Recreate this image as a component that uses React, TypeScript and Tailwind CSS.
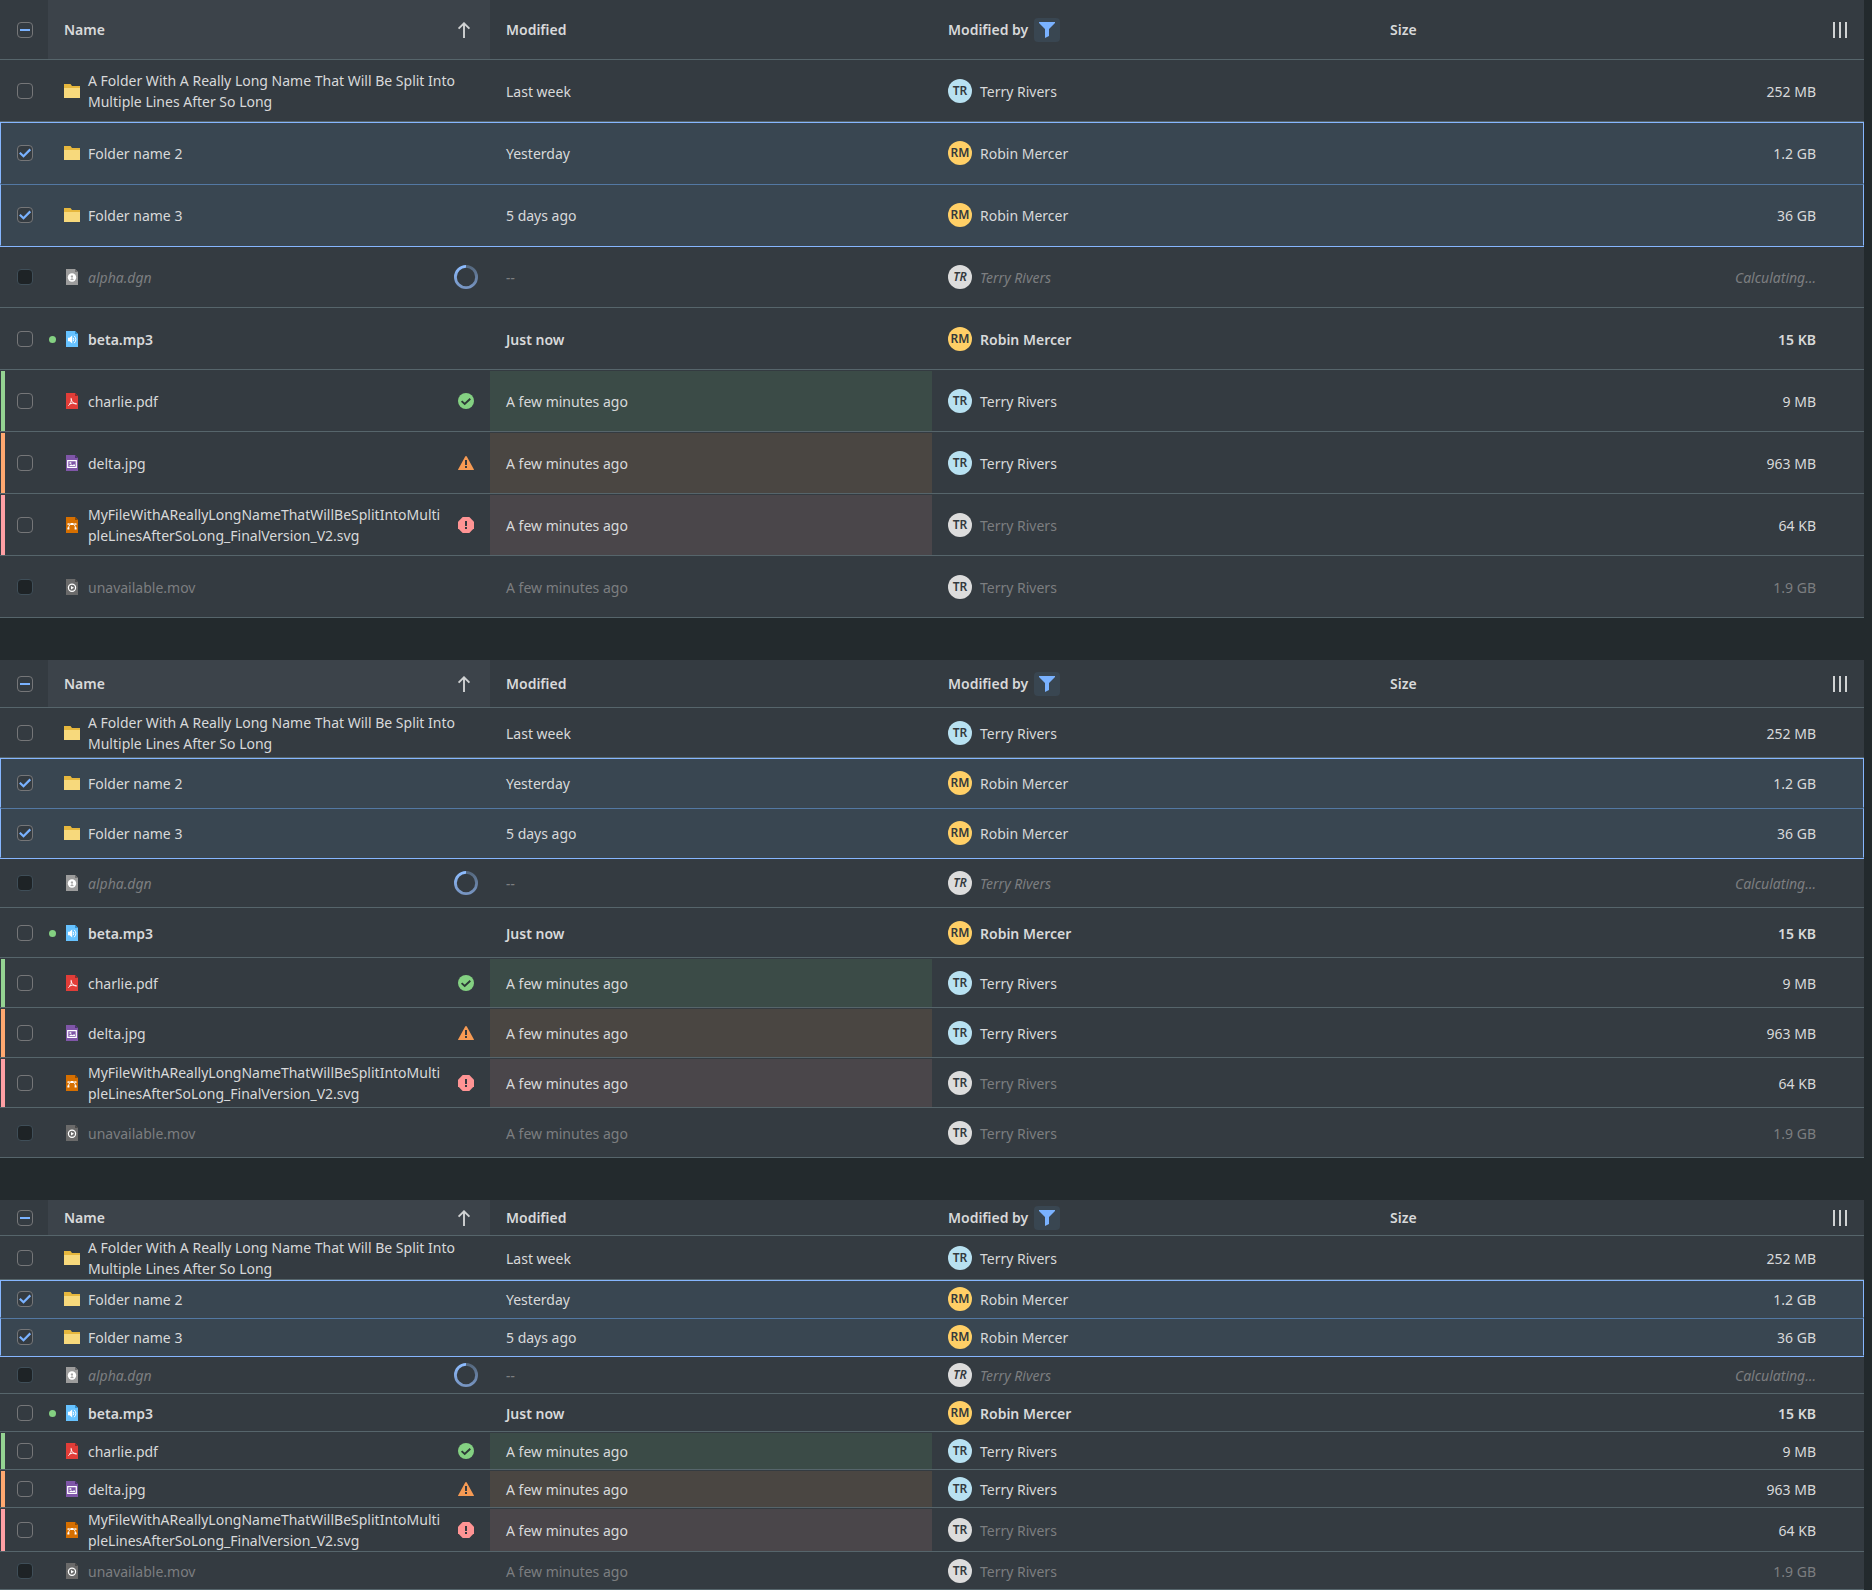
import { useEffect, useRef } from 'react';
import type { ReactNode } from 'react';

type Status = 'positive' | 'warning' | 'negative';
type FileKind = 'dgn' | 'mp3' | 'pdf' | 'jpg' | 'svg' | 'mov';

interface Row {
  name: string;
  modified: string;
  by: 'Terry Rivers' | 'Robin Mercer';
  size: string;
  kind?: FileKind;
  selected?: boolean;
  loading?: boolean;
  disabled?: boolean;
  isNew?: boolean;
  status?: Status;
  byDisabled?: boolean;
}

const rows: Row[] = [
  {
    name: 'A Folder With A Really Long Name That Will Be Split Into Multiple Lines After So Long',
    modified: 'Last week',
    by: 'Terry Rivers',
    size: '252 MB',
  },
  { name: 'Folder name 2', modified: 'Yesterday', by: 'Robin Mercer', size: '1.2 GB', selected: true },
  { name: 'Folder name 3', modified: '5 days ago', by: 'Robin Mercer', size: '36 GB', selected: true },
  { name: 'alpha.dgn', modified: '--', by: 'Terry Rivers', size: 'Calculating…', kind: 'dgn', loading: true },
  { name: 'beta.mp3', modified: 'Just now', by: 'Robin Mercer', size: '15 KB', kind: 'mp3', isNew: true },
  { name: 'charlie.pdf', modified: 'A few minutes ago', by: 'Terry Rivers', size: '9 MB', kind: 'pdf', status: 'positive' },
  { name: 'delta.jpg', modified: 'A few minutes ago', by: 'Terry Rivers', size: '963 MB', kind: 'jpg', status: 'warning' },
  {
    name: 'MyFileWithAReallyLongNameThatWillBeSplitIntoMultipleLinesAfterSoLong_FinalVersion_V2.svg',
    modified: 'A few minutes ago',
    by: 'Terry Rivers',
    size: '64 KB',
    kind: 'svg',
    status: 'negative',
    byDisabled: true,
  },
  { name: 'unavailable.mov', modified: 'A few minutes ago', by: 'Terry Rivers', size: '1.9 GB', kind: 'mov', disabled: true },
];

function FolderIcon() {
  return (
    <svg viewBox="0 0 16 16" className="size-4 shrink-0" aria-hidden="true">
      <path d="M0 1h6.500l1.500 2H16v4H0z" fill="#e6b73d" />
      <path d="M0 5h16v10H0z" fill="#f7d97c" />
    </svg>
  );
}

const fileColors: Record<FileKind, [string, string]> = {
  dgn: ['#9c9c9c', '#6f6f6f'],
  mp3: ['#66c2ff', '#2f8fd0'],
  pdf: ['#e13d38', '#8f2a28'],
  jpg: ['#7f56a8', '#4c3070'],
  svg: ['#d66f00', '#8f4a00'],
  mov: ['#6a6a6a', '#484848'],
};

const fileGlyphs: Record<FileKind, ReactNode> = {
  dgn: (
    <>
      <circle cx="8" cy="8.5" r="4.2" fill="#fff" />
      <path d="M8 6.2v4.400M6.800 7.400h2.200M6.500 10.600h3" fill="none" stroke="#9c9c9c" strokeWidth="0.900" />
    </>
  ),
  mp3: (
    <>
      <path d="M4 6.800h1.600L8.200 4.600v7.800L5.600 10.200H4z" fill="#fff" />
      <path d="M9.200 6.800q1.100 1.700 0 3.400M10.200 4.800q3.400 3.700 0 7.400" fill="none" stroke="#fff" strokeWidth="1" />
    </>
  ),
  pdf: (
    <>
      <path d="M7.100 4.900C8 8 6.300 11.500 4.300 12.700M7.200 6.200C7.800 9 9.600 10.900 12.600 11.200M5.400 11Q8.600 9.300 12.600 10.600" fill="none" stroke="#fff" strokeWidth="0.900" />
    </>
  ),
  jpg: (
    <>
      <path d="M3.700 5.700h8.600v6.600H3.700z" fill="none" stroke="#fff" strokeWidth="1.200" />
      <path d="M5.500 7.200h1.800v1.500H5.500zM5.500 11V9.900l2-.4 1.500.8L10 9l1 1v1z" fill="#fff" />
    </>
  ),
  svg: (
    <>
      <path d="M4.500 11.500C4.600 8.500 5.800 7 8 7s3.400 1.500 3.500 4.500M4 7h8" fill="none" stroke="#fff" strokeWidth="1" />
      <path d="M7 6h2v2H7zM3.400 10.600h2v2h-2zM10.600 10.600h2v2h-2zM3.400 6.400h1.300v1.300H3.400zM11.300 6.400h1.300v1.300h-1.300z" fill="#fff" />
    </>
  ),
  mov: (
    <>
      <circle cx="8" cy="8.700" r="3.600" fill="none" stroke="#fff" strokeWidth="1.200" />
      <path d="M7 6.900v3.600l3-1.800z" fill="#fff" />
    </>
  ),
};

function FileIcon({ kind }: { kind: FileKind }) {
  const [body, fold] = fileColors[kind];
  return (
    <svg viewBox="0 0 16 16" className="size-4 shrink-0" aria-hidden="true">
      <path d="M2 0h9l3 3v13H2z" fill={body} />
      <path d="M11 0l3 3h-3z" fill={fold} />
      {fileGlyphs[kind]}
    </svg>
  );
}

function StatusIcon({ status }: { status: Status }) {
  if (status === 'positive') {
    return (
      <svg viewBox="0 0 16 16" className="ml-1 size-4 shrink-0" role="img" aria-label="Positive">
        <circle cx="8" cy="8" r="8" fill="#84d182" />
        <path d="M3.600 8.100l3.100 2.900 5.600-5.300" fill="none" stroke="#2c3a36" strokeWidth="1.900" />
      </svg>
    );
  }
  if (status === 'warning') {
    return (
      <svg viewBox="0 0 16 16" className="ml-1 size-4 shrink-0" role="img" aria-label="Warning">
        <path d="M8 .9q.5 0 .8.500l7 12.800q.5.900-.5.900H.7q-1 0-.5-.9l7-12.800Q7.500.9 8 .9z" fill="#f69a54" />
        <path d="M7 5h2v5H7zM7 11h2v2H7z" fill="#33393f" />
      </svg>
    );
  }
  return (
    <svg viewBox="0 0 16 16" className="ml-1 size-4 shrink-0" role="img" aria-label="Negative">
      <path d="M4.700 0h6.600L16 4.700v6.600L11.300 16H4.700L0 11.300V4.700z" fill="#ff9494" />
      <path d="M7 4h2v5H7zM7 10h2v2H7z" fill="#33393f" />
    </svg>
  );
}

function Spinner() {
  return (
    <svg viewBox="0 0 24 24" className="-mx-1 size-6 shrink-0" role="img" aria-label="Loading">
      <defs>
        <linearGradient id="spin-left" x1="0" y1="0" x2="0" y2="1">
          <stop offset="0" stopColor="#8dbcff" />
          <stop offset="1" stopColor="#7795c2" />
        </linearGradient>
        <linearGradient id="spin-right" x1="0" y1="0" x2="0" y2="1">
          <stop offset="0" stopColor="#55687e" />
          <stop offset="1" stopColor="#7795c2" />
        </linearGradient>
      </defs>
      <path d="M12 1.400a10.600 10.600 0 0 0 0 21.200" fill="none" stroke="url(#spin-left)" strokeWidth="2.800" />
      <path d="M12 1.400a10.600 10.600 0 0 1 0 21.200" fill="none" stroke="url(#spin-right)" strokeWidth="2.800" />
    </svg>
  );
}

interface CheckboxProps {
  label: string;
  checked?: boolean;
  indeterminate?: boolean;
  disabled?: boolean;
}

function Checkbox({ label, checked = false, indeterminate = false, disabled = false }: CheckboxProps) {
  const ref = useRef<HTMLInputElement>(null);
  useEffect(() => {
    if (ref.current) ref.current.indeterminate = indeterminate;
  }, [indeterminate]);
  return (
    <label className="ml-[17px] grid size-4">
      <input
        ref={ref}
        type="checkbox"
        aria-label={label}
        defaultChecked={checked}
        disabled={disabled}
        className="col-start-1 row-start-1 size-4 appearance-none rounded border border-[#757678] bg-[#343b41] disabled:border-[#3f4e58] disabled:bg-[#1e2326]"
      />
      <svg viewBox="0 0 16 16" className="pointer-events-none col-start-1 row-start-1 size-4" aria-hidden="true">
        {indeterminate && <path d="M3 7h10v2H3z" fill="#7ab2ff" />}
        {checked && <path d="M2.800 7.700l3.700 3.500L13.300 4.400" fill="none" stroke="#7ab2ff" strokeWidth="2.200" />}
      </svg>
    </label>
  );
}

function Avatar({ name, muted }: { name: Row['by']; muted: boolean }) {
  const initials = name === 'Terry Rivers' ? 'TR' : 'RM';
  const color = muted ? 'bg-[#dcdcdc]' : initials === 'TR' ? 'bg-[#b8e1f1]' : 'bg-[#ffcf66]';
  return (
    <span
      aria-hidden="true"
      className={`flex size-6 shrink-0 items-center justify-center rounded-full text-xs font-semibold text-[#33393d] ${color}`}
    >
      {initials}
    </span>
  );
}

const railColors: Record<Status, string> = {
  positive: 'bg-[#95d392]',
  warning: 'bg-[#ffa870]',
  negative: 'bg-[#ffa0a4]',
};

const cellTints: Record<Status, string> = {
  positive: 'bg-[#3b4b47]',
  warning: 'bg-[#4a4642]',
  negative: 'bg-[#4a464a]',
};

interface DataRowProps {
  row: Row;
  height: string;
  previousSelected: boolean;
}

function DataRow({ row, height, previousSelected }: DataRowProps) {
  const muted = Boolean(row.loading || row.disabled);
  const topEdge = row.selected
    ? previousSelected
      ? 'border-t-[#5378a3]'
      : 'border-t-[#86b6ff]'
    : previousSelected
      ? 'border-t-[#86b6ff]'
      : 'border-t-transparent';
  const bottomEdge = row.selected ? 'border-b-transparent' : 'border-b-[#56656b]';
  const tone = row.selected ? 'bg-[#394651]' : 'bg-[#343b41]';
  const text = muted ? 'text-[#7c7e80]' : 'text-[#d8d9da]';
  const weight = row.isNew ? 'font-semibold' : 'font-normal';
  const style = row.loading ? 'italic' : 'not-italic';
  const cell = `${height} border-y p-0 ${topEdge} ${bottomEdge}`;

  return (
    <tr className={`${tone} ${text} ${weight} ${style}`}>
      <td className={`${cell} relative ${row.selected ? 'border-l border-l-[#86b6ff]' : ''}`}>
        {row.status && <span className={`absolute inset-y-0 left-px w-1 ${railColors[row.status]}`} />}
        <div className={row.selected ? '-ml-px' : ''}>
          <Checkbox label={`Select ${row.name}`} checked={row.selected} disabled={muted} />
        </div>
      </td>
      <td className={`${cell} relative px-4`}>
        {row.isNew && (
          <span className="absolute inset-y-0 left-px flex items-center">
            <span className="size-[7px] rounded-full bg-[#84d182]" />
          </span>
        )}
        <div className="flex items-center gap-2">
          {row.kind ? <FileIcon kind={row.kind} /> : <FolderIcon />}
          <span className="min-w-0 grow break-words">{row.name}</span>
          {row.status && <StatusIcon status={row.status} />}
          {row.loading && <Spinner />}
        </div>
      </td>
      <td className={`${cell} bg-clip-padding px-4 ${row.status ? cellTints[row.status] : ''}`}>{row.modified}</td>
      <td className={`${cell} px-4`}>
        <div className="flex items-center gap-2">
          <Avatar name={row.by} muted={muted || Boolean(row.byDisabled)} />
          <span className={row.byDisabled ? 'text-[#7c7e80]' : ''}>{row.by}</span>
        </div>
      </td>
      <td className={`${cell} text-right`}>{row.size}</td>
      <td className={`${cell} ${row.selected ? 'border-r border-r-[#86b6ff]' : ''}`} />
    </tr>
  );
}

interface FileTableProps {
  label: string;
  headHeight: string;
  rowHeight: string;
}

function FileTable({ label, headHeight, rowHeight }: FileTableProps) {
  const head = `${headHeight} border-b border-[#56656b] p-0 font-semibold`;
  return (
    <table aria-label={label} className="w-full table-fixed border-separate border-spacing-0 text-left">
      <colgroup>
        <col className="w-12" />
        <col />
        <col />
        <col />
        <col />
        <col className="w-12" />
      </colgroup>
      <thead className="bg-[#343b41] text-[#d8d9da]">
        <tr>
          <th scope="col" className={head}>
            <Checkbox label="Select all" indeterminate />
          </th>
          <th scope="col" aria-sort="ascending" className={`${head} bg-[#3c434a] px-4`}>
            <button type="button" className="flex w-full items-center justify-between pr-0.5">
              Name
              <svg viewBox="0 0 16 16" className="size-4" aria-hidden="true">
                <path d="M8 16V1.500M2.600 6.600L8 1.300l5.400 5.300" fill="none" stroke="#d0d2d3" strokeWidth="1.900" />
              </svg>
            </button>
          </th>
          <th scope="col" className={`${head} px-4`}>
            Modified
          </th>
          <th scope="col" className={`${head} px-4`}>
            <div className="flex items-center gap-1.5">
              Modified by
              <button
                type="button"
                aria-label="Filter"
                className="flex h-6 w-[26px] items-center justify-center rounded bg-[#394651]"
              >
                <svg viewBox="0 0 16 16" className="size-4" aria-hidden="true">
                  <path d="M0 0h16v1L10 7v7l-4 2V7L0 1z" fill="#7ab2ff" />
                </svg>
              </button>
            </div>
          </th>
          <th scope="col" className={`${head} px-4`}>
            Size
          </th>
          <th scope="col" className={head}>
            <button type="button" aria-label="Manage columns" className="ml-4 block">
              <svg viewBox="0 0 16 16" className="size-4" aria-hidden="true">
                <path d="M1 0h2v16H1zM7 0h2v16H7zM13 0h2v16h-2z" fill="#d0d2d3" />
              </svg>
            </button>
          </th>
        </tr>
      </thead>
      <tbody>
        {rows.map((row, index) => (
          <DataRow
            key={row.name}
            row={row}
            height={rowHeight}
            previousSelected={index > 0 && Boolean(rows[index - 1].selected)}
          />
        ))}
      </tbody>
    </table>
  );
}

export default function App() {
  return (
    <main className="flex min-h-screen flex-col gap-[42px] bg-[#232a2d] pr-2 font-['Noto_Sans',sans-serif] text-sm leading-[21px]">
      <FileTable label="Files, default density" headHeight="h-[60px]" rowHeight="h-[62px]" />
      <FileTable label="Files, condensed density" headHeight="h-12" rowHeight="h-[50px]" />
      <FileTable label="Files, extra condensed density" headHeight="h-9" rowHeight="h-[38px]" />
    </main>
  );
}
